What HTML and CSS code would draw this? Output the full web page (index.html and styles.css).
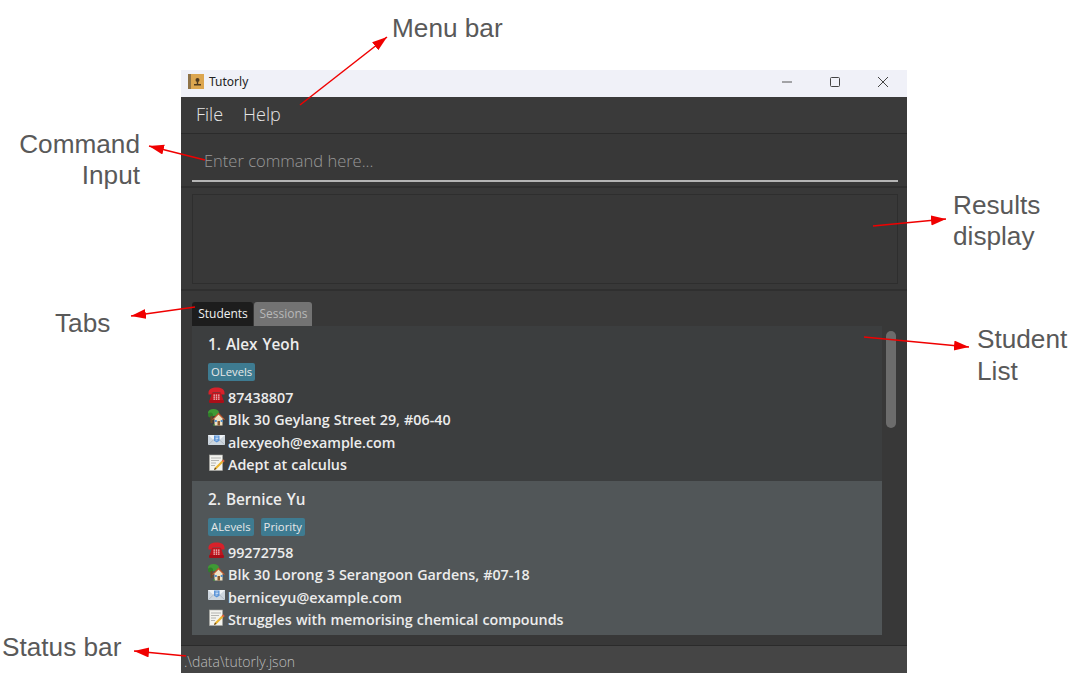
FILE: index.html
```html
<!DOCTYPE html>
<html>
<head>
    <title>Tutorly</title>
    <link rel="stylesheet" href="styles.css">
</head>
<body>
    <svg class="defs" width="0" height="0">
        <symbol id="i-phone" viewBox="0 0 17 17">
            <path d="M.5 6C.5 2 4 .5 8.500 .5S16.500 2 16.500 6V7.500h-4V5.500h-8v2h-4z" fill="#d8212a"/>
            <path d="M4 6h9l2.500 7.500H1.500z" fill="#c2141d"/>
            <rect x="1" y="13" width="15" height="3" rx="1" fill="#a80f18"/>
            <path d="M5.500 7.500h1.400v1.200H5.500zM7.800 7.500h1.400v1.200H7.800zM10.100 7.500h1.400v1.200H10.100zM5.500 9.500h1.400v1.200H5.500zM7.800 9.500h1.400v1.200H7.800zM10.100 9.500h1.400v1.200H10.100zM5.500 11.500h1.400v1.200H5.500zM7.800 11.500h1.400v1.200H7.800zM10.100 11.500h1.400v1.200H10.100z" fill="#f4d4d4"/>
        </symbol>
        <symbol id="i-home" viewBox="0 0 17 17">
            <ellipse cx="5.500" cy="3.500" rx="5.500" ry="3.500" fill="#3f9a35"/>
            <circle cx="2.500" cy="6" r="2.500" fill="#2f7f2a"/>
            <rect x="2.500" y="7" width="2" height="7" fill="#6b4a26"/>
            <path d="M5 10l5.500-5 5.500 5h-1.500v6.500h-8V10z" fill="#f0e2c4"/>
            <path d="M4 10.500l6.500-7 6.500 7-1 .5-5.500-5.500-5.500 5.500z" fill="#b8542c"/>
            <rect x="9.500" y="12" width="2.500" height="4.500" fill="#8a5a30"/>
            <rect x="6.800" y="11" width="2" height="2" fill="#4e8fd0"/>
            <rect x="12.700" y="11" width="2" height="2" fill="#4e8fd0"/>
            <path d="M5 15.500h2v1H5z" fill="#3f9a35"/>
        </symbol>
        <symbol id="i-mail" viewBox="0 0 17 17">
            <rect x="0" y="3" width="17" height="10" fill="#cdd6de"/>
            <path d="M0 3l8.500 7.500L17 3z" fill="#eef2f5"/>
            <path d="M0 13l6.500-6M17 13l-6.500-6" stroke="#a3aeb8" stroke-width=".7" fill="none"/>
            <path d="M6 3.500h5.500v5.300L8.700 10.500 6 8.800z" fill="#5a94d8"/>
            <path d="M7.500 5h2.800M7.500 6.500h2.800M7.500 8h2" stroke="#dbe9f8" stroke-width=".8"/>
        </symbol>
        <symbol id="i-note" viewBox="0 0 17 17">
            <rect x="1.500" y="1" width="13" height="15.500" fill="#f3f3ee" stroke="#a9a9a3" stroke-width=".6"/>
            <path d="M3 4h10M3 6.500h8M3 9h5M3 11.500h4" stroke="#9a9a96" stroke-width=".7"/>
            <path d="M15 5.500l1.500 1.500-8 8-2.500 1 1-2.500z" fill="#eab32d"/>
            <path d="M15 5.500l1.500 1.500-1.200 1.200-1.500-1.500z" fill="#d9534a"/>
            <path d="M7 13.500l1.500 1.500-2.500 1z" fill="#5a3d20"/>
        </symbol>
    </svg>

    <div class="window">
        <div class="titlebar">
            <svg class="app-icon" width="16" height="15" viewBox="0 0 16 15">
                <rect width="16" height="15" fill="#dca650"/>
                <rect width="3" height="15" fill="#8f7348"/>
                <circle cx="9.500" cy="6" r="2" fill="#4f3a20"/>
                <path d="M8.800 7.500h1.400v2.500H13v1.500H6V10h2.800z" fill="#4f3a20"/>
            </svg>
            <span class="app-name">Tutorly</span>
            <div class="win-buttons">
                <svg width="12" height="12" viewBox="0 0 12 12"><path d="M1 6h10" stroke="#555" fill="none"/></svg>
                <svg width="12" height="12" viewBox="0 0 12 12"><rect x="1.500" y="1.500" width="9" height="9" rx="1" stroke="#444" fill="none"/></svg>
                <svg width="12" height="12" viewBox="0 0 12 12"><path d="M1 1l10 10M11 1L1 11" stroke="#444" fill="none"/></svg>
            </div>
        </div>

        <div class="menubar">
            <span>File</span>
            <span>Help</span>
        </div>

        <div class="command-pane">
            <div class="command-box">Enter command here...</div>
        </div>

        <div class="results-pane">
            <div class="results-box"></div>
        </div>

        <div class="list-pane">
            <div class="tabs">
                <div class="tab tab-active">Students</div>
                <div class="tab">Sessions</div>
            </div>
            <div class="list-wrap">
                <div class="list">
                    <div class="card">
                        <div class="card-name">1. Alex Yeoh</div>
                        <div class="tags"><span class="tag">OLevels</span></div>
                        <div class="row"><svg class="icon"><use href="#i-phone"/></svg>87438807</div>
                        <div class="row"><svg class="icon"><use href="#i-home"/></svg>Blk 30 Geylang Street 29, #06-40</div>
                        <div class="row"><svg class="icon"><use href="#i-mail"/></svg>alexyeoh@example.com</div>
                        <div class="row"><svg class="icon"><use href="#i-note"/></svg>Adept at calculus</div>
                    </div>
                    <div class="card card-alt">
                        <div class="card-name">2. Bernice Yu</div>
                        <div class="tags"><span class="tag">ALevels</span><span class="tag">Priority</span></div>
                        <div class="row"><svg class="icon"><use href="#i-phone"/></svg>99272758</div>
                        <div class="row"><svg class="icon"><use href="#i-home"/></svg>Blk 30 Lorong 3 Serangoon Gardens, #07-18</div>
                        <div class="row"><svg class="icon"><use href="#i-mail"/></svg>berniceyu@example.com</div>
                        <div class="row"><svg class="icon"><use href="#i-note"/></svg>Struggles with memorising chemical compounds</div>
                    </div>
                </div>
                <div class="scroll-track"><div class="scroll-thumb"></div></div>
            </div>
        </div>

        <div class="statusbar">.\data\tutorly.json</div>
    </div>

    <div class="note note-menu">Menu bar</div>
    <div class="note note-command">Command<br>Input</div>
    <div class="note note-results">Results<br>display</div>
    <div class="note note-tabs">Tabs</div>
    <div class="note note-list">Student<br>List</div>
    <div class="note note-status">Status bar</div>

    <svg class="arrows" width="1083" height="682" viewBox="0 0 1083 682">
        <defs>
            <marker id="head" markerWidth="16" markerHeight="12" refX="15" refY="5" orient="auto" markerUnits="userSpaceOnUse">
                <path d="M0 0L15 5L0 10z" fill="#f00000"/>
            </marker>
        </defs>
        <g stroke="#f00000" stroke-width="1.500" fill="none">
            <path d="M300 105L387 37" marker-end="url(#head)"/>
            <path d="M205 160L149 146" marker-end="url(#head)"/>
            <path d="M873 226L946 219" marker-end="url(#head)"/>
            <path d="M195 307L131 316" marker-end="url(#head)"/>
            <path d="M864 337L969 347" marker-end="url(#head)"/>
            <path d="M186 656L134 651" marker-end="url(#head)"/>
        </g>
    </svg>
</body>
</html>
```

FILE: styles.css
```css
html, body {
    margin: 0;
    padding: 0;
}
body {
    width: 1083px;
    height: 682px;
    overflow: hidden;
    background-color: #fff;
    font-family: "Open Sans", sans-serif;
}
.defs {
    display: block;
}
.window {
    width: 726px;
    height: 603px;
    margin: 70px 0 0 181px;
    display: flex;
    flex-direction: column;
    background-color: #383838;
}
.titlebar {
    height: 27px;
    flex: none;
    display: flex;
    align-items: center;
    background-color: #f0f1f8;
    box-sizing: border-box;
    padding: 0 0 4px 7px;
    color: #222;
}
.app-icon {
    margin-right: 5px;
}
.app-name {
    font-size: 12px;
    font-family: "Noto Sans", sans-serif;
}
.win-buttons {
    margin-left: auto;
    margin-right: 18px;
    display: flex;
    gap: 36px;
}
.menubar {
    height: 37px;
    flex: none;
    box-sizing: border-box;
    display: flex;
    align-items: center;
    gap: 20px;
    padding: 0 0 2px 15px;
    border-bottom: 1px solid #2b2b2b;
    background-color: #3a3a3a;
    color: #e6e6e6;
    font-size: 18px;
    font-weight: 300;
}
.command-pane {
    height: 54px;
    flex: none;
    box-sizing: border-box;
    padding: 0 9px 0 11px;
    border-bottom: 2px solid #2f2f2f;
}
.command-box {
    height: 48px;
    box-sizing: border-box;
    padding: 15px 0 0 12px;
    border-bottom: 2px solid #b5b5b5;
    color: #999;
    font-size: 16.500px;
    line-height: 24px;
    font-weight: 300;
}
.results-pane {
    height: 103px;
    flex: none;
    box-sizing: border-box;
    padding: 6px 9px 5px 11px;
    border-bottom: 2px solid #2f2f2f;
}
.results-box {
    height: 90px;
    box-sizing: border-box;
    border: 1px solid #2e2e2e;
}
.list-pane {
    height: 355px;
    flex: none;
    box-sizing: border-box;
    padding: 11px 9px 0 11px;
    border-bottom: 1px solid #2b2b2b;
}
.tabs {
    display: flex;
    gap: 1px;
    height: 24px;
}
.tab {
    width: 58px;
    box-sizing: border-box;
    padding-left: 1px;
    border-radius: 3px 3px 0 0;
    background-color: #737373;
    color: #b8b8b8;
    font-size: 12px;
    line-height: 24px;
    text-align: center;
}
.tab-active {
    width: 61px;
    background-color: #1d1d1d;
    color: #f0f0f0;
}
.list-wrap {
    display: flex;
    height: 319px;
}
.list {
    width: 690px;
    flex: none;
}
.card {
    height: 155px;
    box-sizing: border-box;
    padding: 7px 0 0 16px;
    background-color: #3c3e3f;
    color: #ececec;
    font-size: 14.300px;
    font-weight: 600;
}
.card-alt {
    height: 154px;
    background-color: #515658;
}
.card-name {
    height: 22px;
    line-height: 22px;
    font-size: 15.300px;
    word-spacing: 1px;
}
.tags {
    display: flex;
    gap: 7px;
    margin-top: 8px;
    margin-bottom: 6px;
}
.tag {
    height: 18px;
    padding: 0 3px;
    border-radius: 2px;
    background-color: #3e7b91;
    color: #e8e8e8;
    font-size: 11.300px;
    font-weight: 400;
    line-height: 18px;
}
.row {
    height: 22.300px;
    line-height: 22px;
    display: flex;
    align-items: center;
    white-space: nowrap;
    word-spacing: .4px;
}
.icon {
    width: 17px;
    height: 17px;
    margin: -5px 3px 0 0;
    flex: none;
}
.scroll-track {
    flex: 1;
    display: flex;
    justify-content: center;
    padding-top: 5px;
}
.scroll-thumb {
    width: 10px;
    height: 97px;
    margin-left: 2px;
    border-radius: 5px;
    background-color: #6c6c6c;
}
.statusbar {
    flex: 1;
    min-height: 0;
    overflow: hidden;
    padding-left: 3px;
    background-color: #454545;
    color: #bcbcbc;
    font-size: 14px;
    font-weight: 300;
    line-height: 32px;
}
.note {
    position: absolute;
    color: #595959;
    font-family: "Liberation Sans", sans-serif;
    font-size: 26.200px;
    line-height: 31px;
}
.note-menu { left: 392px; top: 13px; }
.note-command { left: 19px; top: 129px; text-align: right; width: 121px; }
.note-results { left: 953px; top: 190px; }
.note-tabs { left: 55px; top: 308px; }
.note-list { left: 977px; top: 323px; line-height: 32px; }
.note-status { left: 2px; top: 632px; }
.arrows {
    position: absolute;
    left: 0;
    top: 0;
}
```
